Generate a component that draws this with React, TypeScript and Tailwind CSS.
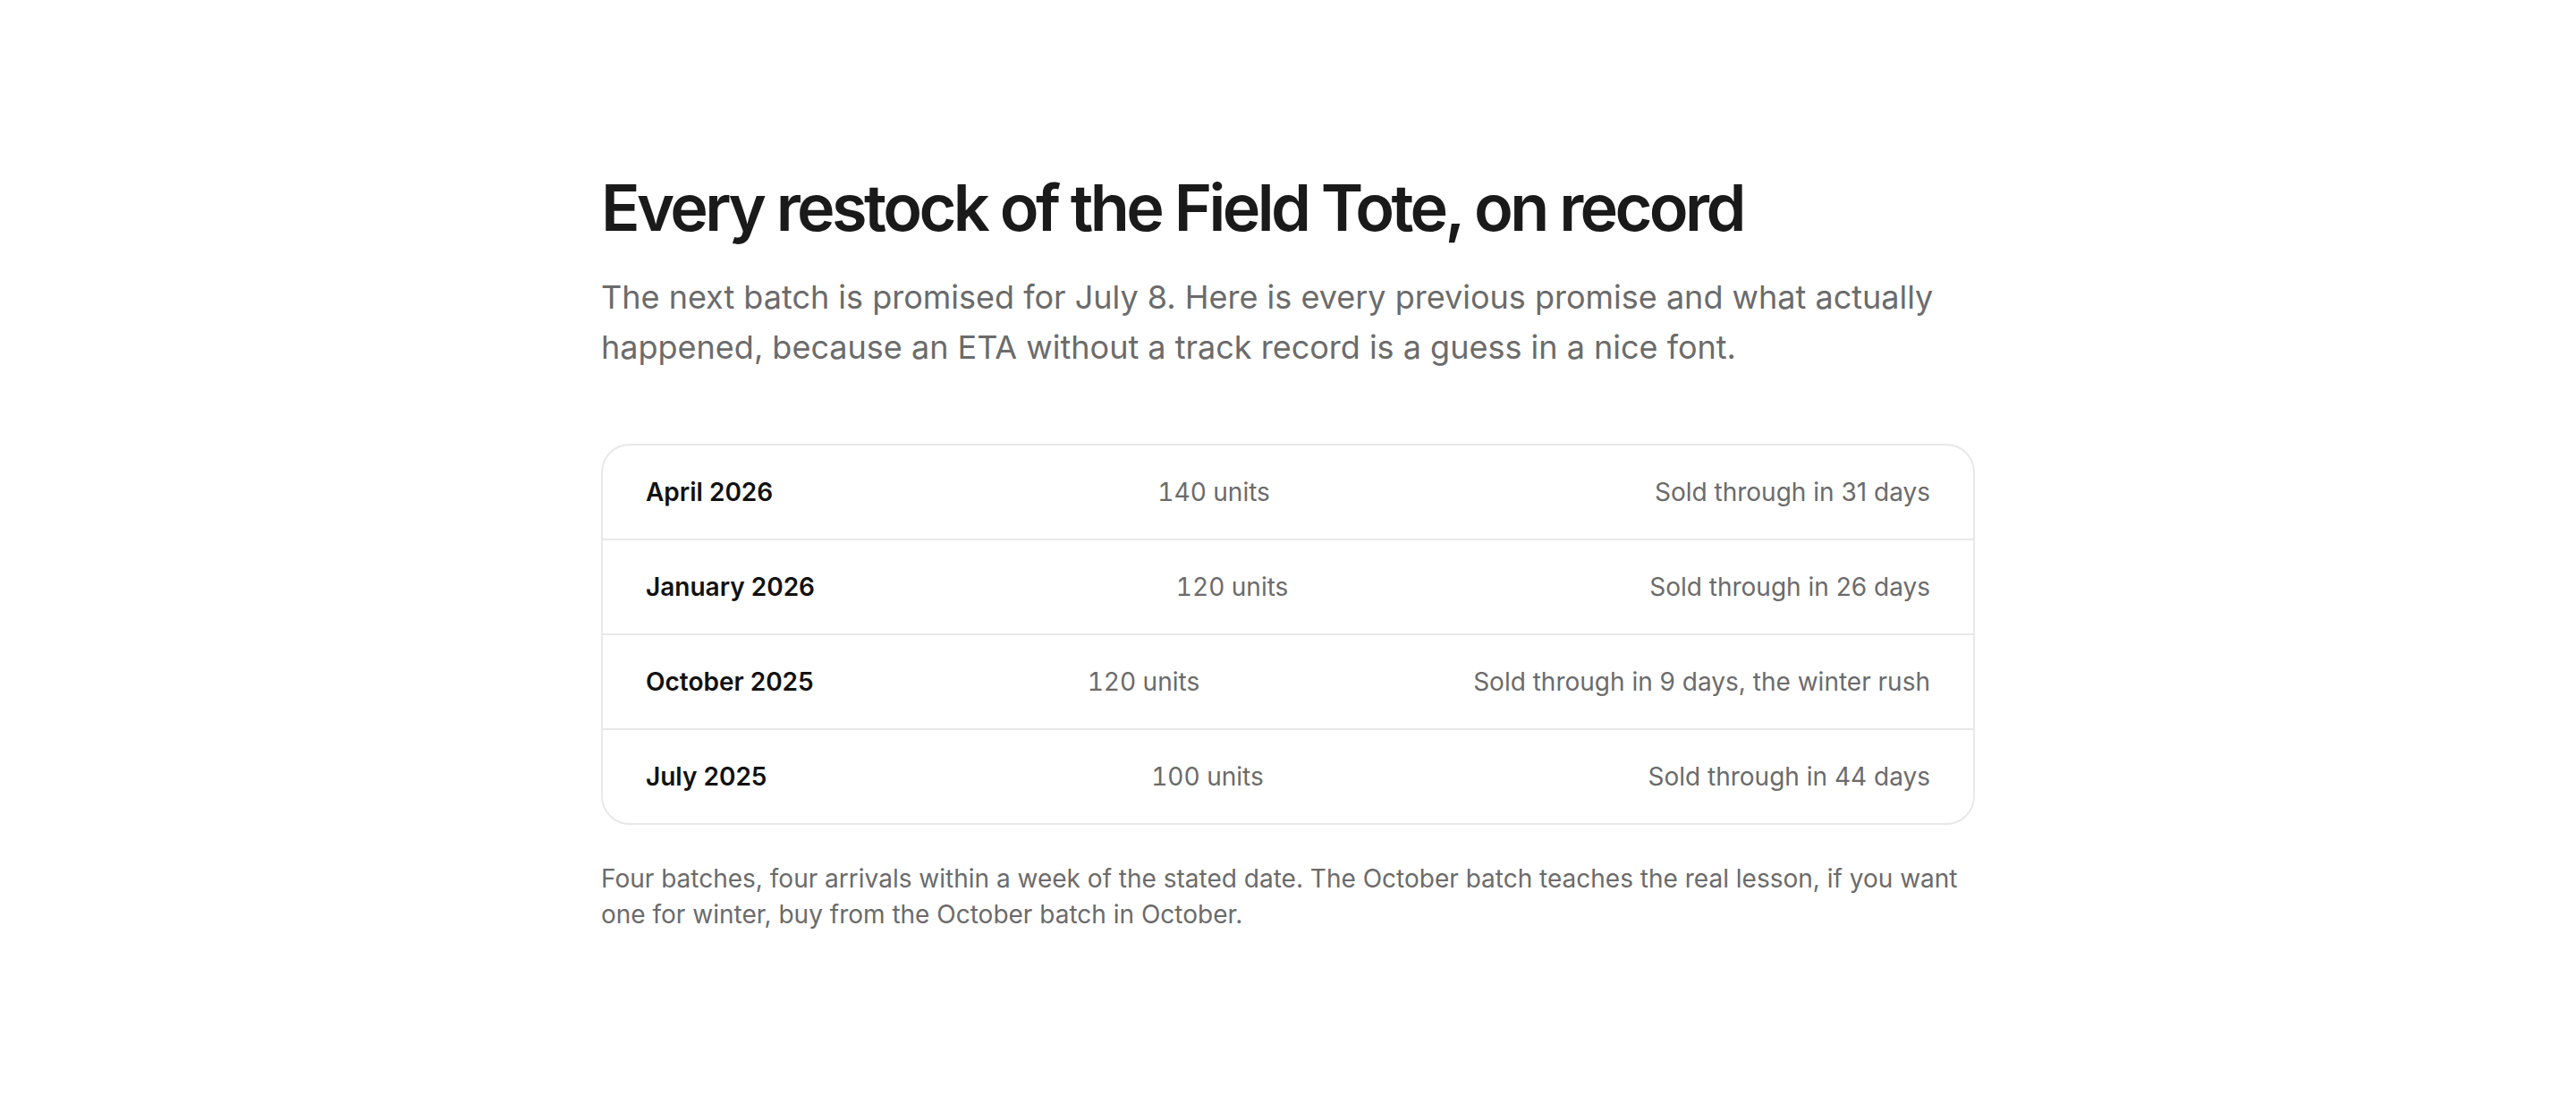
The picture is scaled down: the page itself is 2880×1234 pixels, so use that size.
const batches = [
  { month: "April 2026", units: "140 units", outcome: "Sold through in 31 days" },
  { month: "January 2026", units: "120 units", outcome: "Sold through in 26 days" },
  { month: "October 2025", units: "120 units", outcome: "Sold through in 9 days, the winter rush" },
  { month: "July 2025", units: "100 units", outcome: "Sold through in 44 days" },
];

const App = () => (
  <div className="min-h-screen bg-white font-['Inter',sans-serif] antialiased">
    <main className="mx-auto max-w-[1536px] pt-48 pb-32">
      <h1 className="text-[72px] leading-[80px] font-semibold tracking-tighter text-[#1a1a1a]">
        Every restock of the Field Tote, on record
      </h1>
      <p className="mt-8 text-[36px] leading-[56px] text-[#6b6b6b]">
        The next batch is promised for July 8. Here is every previous promise and what actually happened, because an
        ETA without a track record is a guess in a nice font.
      </p>

      <div className="mt-20 overflow-hidden rounded-[32px] border-2 border-[#e8e8e8]">
        {batches.map((b, i) => (
          <div
            key={b.month}
            className={`flex items-center justify-between px-12 py-8 text-[28px] leading-[40px] ${i > 0 ? "border-t-2 border-[#e8e8e8]" : ""}`}
          >
            <span className="font-semibold text-[#111111]">{b.month}</span>
            <span className="tabular-nums text-[#6b6b6b]">{b.units}</span>
            <span className="text-[#6b6b6b]">{b.outcome}</span>
          </div>
        ))}
      </div>

      <p className="mt-10 text-[28px] leading-[40px] text-[#6b6b6b]">
        Four batches, four arrivals within a week of the stated date. The October batch teaches the real lesson, if you
        want one for winter, buy from the October batch in October.
      </p>
    </main>
  </div>
);

export default App;
